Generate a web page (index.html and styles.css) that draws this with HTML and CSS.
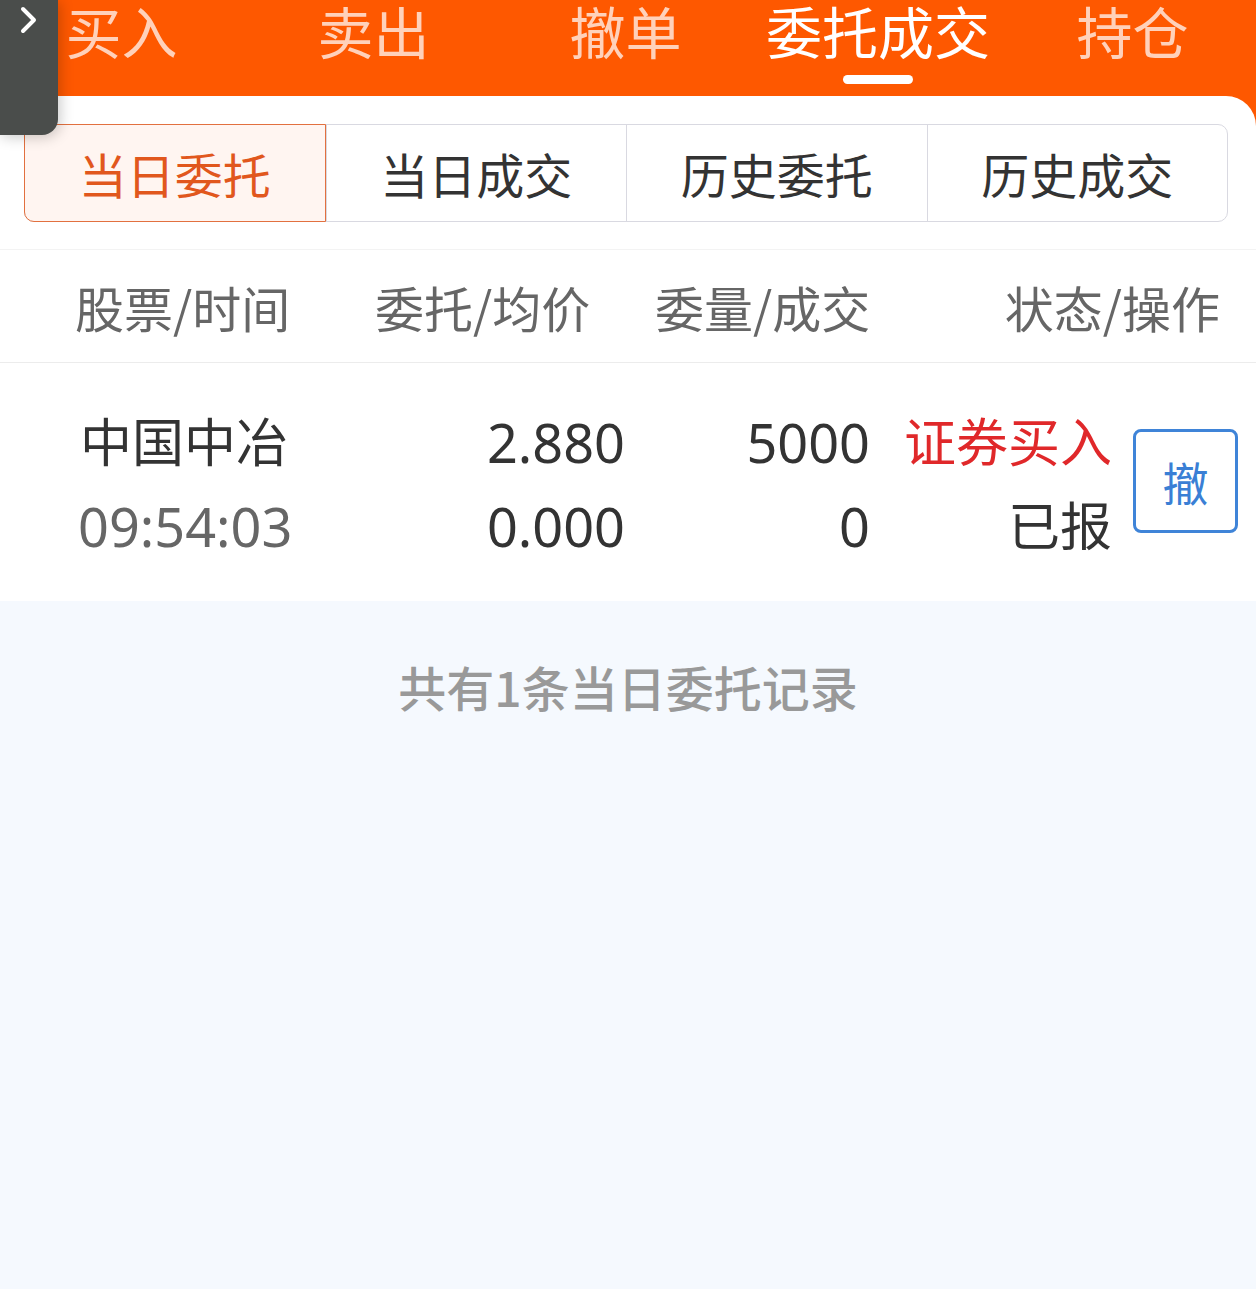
FILE: index.html
```html
<!DOCTYPE html>
<html lang="zh-CN">
<head>
  <meta charset="UTF-8">
  <meta name="viewport" content="width=device-width, initial-scale=1.0">
  <title>委托成交</title>
  <link rel="stylesheet" href="styles.css">
</head>
<body>
  <div class="side-handle">
    <svg width="22" height="32" viewBox="0 0 22 32">
      <path d="M5 4 L16 15 L5 26" fill="none" stroke="#fff" stroke-width="4" stroke-linecap="round" stroke-linejoin="round"/>
    </svg>
  </div>

  <!-- Top navigation -->
  <div class="top-nav">
    <div class="nav-item">买入</div>
    <div class="nav-item">卖出</div>
    <div class="nav-item">撤单</div>
    <div class="nav-item active">委托成交<span class="indicator"></span></div>
    <div class="nav-item">持仓</div>
  </div>

  <div class="panel">
    <div class="seg-wrap">
      <div class="segments">
        <div class="seg active">当日委托</div>
        <div class="seg">当日成交</div>
        <div class="seg">历史委托</div>
        <div class="seg">历史成交</div>
      </div>
    </div>

    <div class="table-head">
      <div>股票/时间</div>
      <div>委托/均价</div>
      <div>委量/成交</div>
      <div class="right">状态/操作</div>
    </div>

    <div class="order-row">
      <div class="cell">
        <div class="name">中国中冶</div>
        <div class="time num">09:54:03</div>
      </div>
      <div class="cell right num">
        <div>2.880</div>
        <div>0.000</div>
      </div>
      <div class="cell right num">
        <div>5000</div>
        <div>0</div>
      </div>
      <div class="cell right">
        <div class="buy">证券买入</div>
        <div>已报</div>
      </div>
      <div class="cell action">
        <button class="cancel-btn">撤</button>
      </div>
    </div>

    <div class="summary">
      <p>共有1条当日委托记录</p>
    </div>
  </div>
</body>
</html>
```

FILE: styles.css
```css
/* Reset */
* {
  margin: 0;
  padding: 0;
  box-sizing: border-box;
}

body {
  font-family: "Noto Sans CJK SC", sans-serif;
  background-color: #fe5800;
  color: #333;
  width: 1256px;
  height: 1289px;
  overflow: hidden;
  position: relative;
}

/* Floating handle on the left */
.side-handle {
  position: absolute;
  left: 0;
  top: 0;
  width: 58px;
  height: 135px;
  background-color: #4a4d4b;
  border-bottom-right-radius: 16px;
  box-shadow: 2px 2px 14px rgba(0, 0, 0, 0.22);
  padding: 5px 0 0 18px;
  z-index: 5;
}

/* Top navigation */
.top-nav {
  display: grid;
  grid-template-columns: 243px 261px 243px 262px 1fr;
  height: 96px;
}

.nav-item {
  display: flex;
  flex-direction: column;
  align-items: center;
  font-size: 56px;
  line-height: 60px;
  color: #ffd1ba;
  white-space: nowrap;
}

.nav-item.active {
  color: #fff;
}

.indicator {
  display: block;
  width: 70px;
  height: 9px;
  margin-top: 15px;
  border-radius: 5px;
  background-color: #fff;
}

/* White panel */
.panel {
  background-color: #fff;
  border-radius: 30px 30px 0 0;
  height: 1193px;
  display: flex;
  flex-direction: column;
}

.seg-wrap {
  padding: 28px 28px 27px 24px;
  border-bottom: 1px solid #f3f3f3;
}

.segments {
  display: grid;
  grid-template-columns: repeat(4, 1fr);
  height: 98px;
  border: 1px solid #d9d9e1;
  border-radius: 10px;
}

.seg {
  display: flex;
  align-items: center;
  justify-content: center;
  font-size: 48px;
  color: #333;
  border-left: 1px solid #d9d9e1;
}

.seg:first-child {
  border-left: none;
}

.seg.active {
  margin: -1px 0 -1px -1px;
  border: 1px solid #e2703f;
  border-radius: 10px 0 0 10px;
  background-color: #fff5f1;
  color: #e1571d;
}

/* Table header */
.table-head {
  display: grid;
  grid-template-columns: 300px 280px 215px 1fr;
  align-items: center;
  height: 113px;
  padding: 0 36px 0 75px;
  border-bottom: 1px solid #ececec;
  font-size: 49px;
  color: #666;
  white-space: nowrap;
}

.right {
  text-align: right;
}

/* Order row */
.order-row {
  display: grid;
  grid-template-columns: 320px 225px 245px 242px 1fr;
  align-items: center;
  height: 238px;
  padding: 3px 18px 0 80px;
  font-family: "Noto Sans", "Noto Sans CJK SC", sans-serif;
  font-size: 52px;
  color: #333;
  white-space: nowrap;
}

.cell div {
  line-height: 84px;
}

.num {
  font-size: 54px;
}

.cell .time {
  margin-left: -2px;
  color: #666;
}

.buy {
  color: #e0282a;
}

.action {
  display: flex;
  justify-content: flex-end;
}

.cancel-btn {
  width: 105px;
  height: 104px;
  margin-top: -6px;
  border: 3px solid #3f84d8;
  border-radius: 8px;
  background-color: #fff;
  color: #3a7fd5;
  font-family: "Noto Sans CJK SC", sans-serif;
  font-size: 46px;
}

/* Summary */
.summary {
  flex: 1;
  background-color: #f5f9fe;
  padding-top: 50px;
  text-align: center;
}

.summary p {
  font-size: 48px;
  font-weight: 500;
  color: #999;
}
```
